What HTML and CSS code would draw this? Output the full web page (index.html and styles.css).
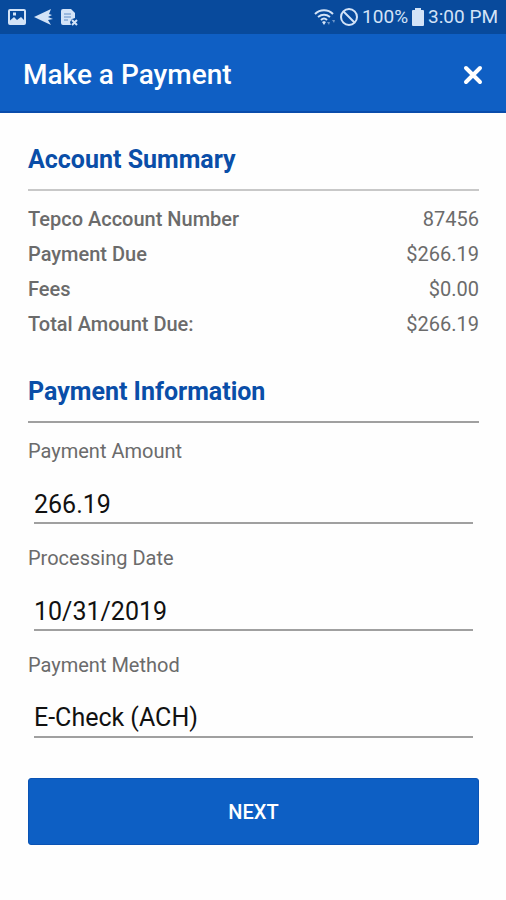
FILE: index.html
```html
<!DOCTYPE html>
<html lang="en">
<head>
<meta charset="utf-8">
<meta name="viewport" content="width=device-width, initial-scale=1">
<title>Make a Payment</title>
<link rel="stylesheet" href="styles.css">
</head>
<body>
<div class="status-bar">
  <div class="status-group status-notifications">
    <svg width="18" height="16" viewBox="0 0 18 16" aria-hidden="true"><path fill="currentColor" fill-rule="evenodd" d="M2 0h14a2 2 0 0 1 2 2v12a2 2 0 0 1-2 2H2a2 2 0 0 1-2-2V2a2 2 0 0 1 2-2zm0 2v9.500l4-3.500 3 3 4-3 3 3V2zm3 1.500h3v3H5z"/></svg>
    <svg width="19" height="16" viewBox="0 0 19 16" aria-hidden="true"><path fill="currentColor" d="M0 8 17 0l-2 5 3 1-4 2 5 2-5 1 3 5z"/></svg>
    <svg width="17" height="17" viewBox="0 0 17 17" aria-hidden="true"><path fill="currentColor" d="M2 0h8l4 4v5l-3 1-2 3 1 3H2a2 2 0 0 1-2-2V2a2 2 0 0 1 2-2z"/><path d="M3 5h7M3 8h7M3 11h4" fill="none" stroke="#5e8cc6" stroke-width="1"/><path d="m11 11 5 5m0-5-5 5" fill="none" stroke="currentColor" stroke-width="2"/></svg>
  </div>
  <div class="status-group">
    <svg width="22" height="17" viewBox="0 0 22 17" aria-hidden="true"><g fill="none" stroke="currentColor" stroke-width="2"><path d="M1 5c5-5 13-5 18 0M4 8c4-3 8-3 12 0M7 11c2-2 4-2 6 0"/></g><path fill="currentColor" d="m8 13 2-1 2 1-2 3z"/><path fill="currentColor" opacity=".5" d="m13 13h3l-1 3zm5-2h3l-1 3z"/></svg>
    <svg width="18" height="18" viewBox="0 0 18 18" aria-hidden="true"><g fill="none" stroke="currentColor" stroke-width="2"><circle cx="9" cy="9" r="8"/><path d="m3.500 3.500 11 11"/></g></svg>
    <span>100%</span>
    <svg width="12" height="18" viewBox="0 0 12 18" aria-hidden="true"><path fill="currentColor" d="M3 0h6v2h2a1 1 0 0 1 1 1v14a1 1 0 0 1-1 1H1a1 1 0 0 1-1-1V3a1 1 0 0 1 1-1h2z"/></svg>
    <span>3:00 PM</span>
  </div>
</div>

<header class="app-bar">
  <h1 class="app-title">Make a Payment</h1>
  <button class="close-button" type="button" aria-label="Close">
    <svg width="20" height="20" viewBox="0 0 20 20" aria-hidden="true"><path d="m3 3 14 14m0-14L3 17" fill="none" stroke="currentColor" stroke-width="4" stroke-linecap="round"/></svg>
  </button>
</header>

<main class="content">
  <section>
    <h2 class="section-title section-title-light">Account Summary</h2>
    <table class="summary">
      <tbody>
        <tr><th scope="row">Tepco Account Number</th><td>87456</td></tr>
        <tr><th scope="row">Payment Due</th><td>$266.19</td></tr>
        <tr><th scope="row">Fees</th><td>$0.00</td></tr>
        <tr><th scope="row">Total Amount Due:</th><td>$266.19</td></tr>
      </tbody>
    </table>
  </section>

  <form class="payment-form">
    <h2 class="section-title">Payment Information</h2>
    <div class="field">
      <label for="amount">Payment Amount</label>
      <input id="amount" type="text" inputmode="decimal" value="266.19">
    </div>
    <div class="field">
      <label for="date">Processing Date</label>
      <input id="date" type="text" value="10/31/2019">
    </div>
    <div class="field">
      <label for="method">Payment Method</label>
      <select id="method"><option>E-Check (ACH)</option></select>
    </div>
    <button class="next-button" type="button">NEXT</button>
  </form>
</main>
</body>
</html>
```
FILE: styles.css
```css
* {
  box-sizing: border-box;
}

body {
  margin: 0;
  background: #fefefe;
  color: #6b6b6b;
  font-family: Roboto, "Liberation Sans", sans-serif;
  font-size: 20px;
  line-height: 24px;
}

svg {
  display: block;
  flex: none;
}

.status-bar {
  display: flex;
  align-items: center;
  justify-content: space-between;
  height: 34px;
  padding: 0 8px;
  background: #084a9c;
  color: #d3e3f7;
  font-size: 19px;
}

.status-group {
  display: flex;
  align-items: center;
  gap: 4px;
}

.status-notifications {
  gap: 8px;
}

.app-bar {
  display: flex;
  align-items: center;
  justify-content: space-between;
  height: 79px;
  padding: 4px 19px 0 23px;
  border-bottom: 2px solid #0a4cab;
  background: #0f5fc4;
  color: #fff;
}

.app-title {
  margin: 0;
  font-size: 28px;
  font-weight: 500;
  line-height: 32px;
}

.close-button {
  padding: 4px;
  border: 0;
  background: none;
  color: inherit;
}

.content {
  padding: 32px 27px 24px 28px;
}

.section-title {
  margin: 0 0 10px;
  padding-bottom: 14px;
  border-bottom: 2px solid #a0a0a0;
  color: #0a4ea8;
  font-size: 25px;
  font-weight: 700;
  line-height: 30px;
}

.section-title-light {
  border-bottom-color: #c8c8c8;
}

.summary {
  width: 100%;
  border-collapse: collapse;
}

.summary th,
.summary td {
  padding: 0;
  height: 35px;
}

.summary th {
  font-weight: 500;
  text-align: left;
}

.summary td {
  text-align: right;
}

.payment-form {
  margin-top: 36px;
}

.field {
  margin-bottom: 16px;
}

.field label {
  display: block;
  padding: 6px 0 4px;
}

.field input,
.field select {
  display: block;
  appearance: none;
  width: calc(100% - 12px);
  height: 57px;
  margin: 0 6px;
  padding: 19px 0 0;
  border: 0;
  border-bottom: 2px solid #a0a0a0;
  border-radius: 0;
  background: none;
  color: #111;
  font: inherit;
  font-size: 25px;
  line-height: 34px;
}

.next-button {
  display: block;
  width: 100%;
  height: 67px;
  margin-top: 40px;
  border: 1px solid #0a53b4;
  border-radius: 3px;
  background: #0d5fc4;
  color: #fff;
  font: inherit;
  font-weight: 500;
}
```
